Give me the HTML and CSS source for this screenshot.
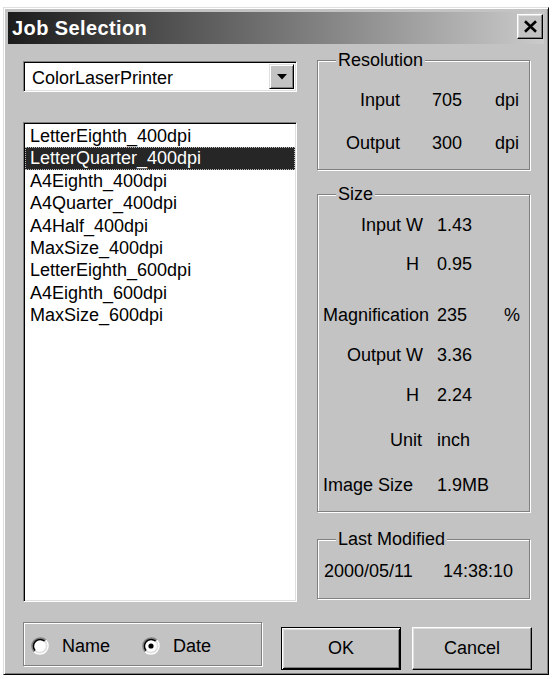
FILE: index.html
```html
<!DOCTYPE html>
<html lang="en">
<head>
<meta charset="utf-8">
<title>Job Selection</title>
<link rel="stylesheet" href="styles.css">
</head>
<body>
<div class="window">
  <div class="titlebar">
    <span class="title">Job Selection</span>
    <button class="close-btn" type="button" aria-label="Close">
      <svg width="15" height="13" viewBox="0 0 15 13"><path d="M2 1.2 L13 11.8 M13 1.2 L2 11.8" stroke="#000" stroke-width="2.6" fill="none"/></svg>
    </button>
  </div>

  <div class="dialog-body">
    <div class="columns">
      <div class="left-col">
        <div class="combo">
          <span class="combo-value">ColorLaserPrinter</span>
          <span class="combo-arrow">
            <svg width="10" height="6" viewBox="0 0 10 6"><polygon points="0,0 10,0 5,5.5" fill="#000"/></svg>
          </span>
        </div>
        <ul class="listbox">
          <li>LetterEighth_400dpi</li>
          <li class="selected">LetterQuarter_400dpi</li>
          <li>A4Eighth_400dpi</li>
          <li>A4Quarter_400dpi</li>
          <li>A4Half_400dpi</li>
          <li>MaxSize_400dpi</li>
          <li>LetterEighth_600dpi</li>
          <li>A4Eighth_600dpi</li>
          <li>MaxSize_600dpi</li>
        </ul>
      </div>

      <div class="right-col">
        <section class="group group-res">
          <h2 class="group-title">Resolution</h2>
          <div class="row first">
            <span class="lbl">Input</span><span class="val">705</span><span class="unit">dpi</span>
          </div>
          <div class="row">
            <span class="lbl">Output</span><span class="val">300</span><span class="unit">dpi</span>
          </div>
        </section>

        <section class="group group-size">
          <h2 class="group-title">Size</h2>
          <div class="row first">
            <span class="lbl">Input W</span><span class="val">1.43</span>
          </div>
          <div class="row gap-s">
            <span class="lbl lbl-h">H</span><span class="val">0.95</span>
          </div>
          <div class="row gap-l">
            <span class="lbl lbl-left">Magnification</span><span class="val">235</span><span class="unit">%</span>
          </div>
          <div class="row gap-m">
            <span class="lbl">Output W</span><span class="val">3.36</span>
          </div>
          <div class="row gap-m">
            <span class="lbl lbl-h">H</span><span class="val">2.24</span>
          </div>
          <div class="row gap-ml">
            <span class="lbl lbl-unit">Unit</span><span class="val">inch</span>
          </div>
          <div class="row gap-ml">
            <span class="lbl lbl-left">Image Size</span><span class="val">1.9MB</span>
          </div>
        </section>

        <section class="group group-date">
          <h2 class="group-title">Last Modified</h2>
          <div class="row first">
            <span class="date">2000/05/11</span><span class="time">14:38:10</span>
          </div>
        </section>
      </div>
    </div>

    <div class="bottom-row">
      <div class="sort-group">
        <label class="radio">
          <svg width="18" height="18" viewBox="0 0 18 18">
            <circle cx="9" cy="9" r="7" fill="#fff"/>
            <path d="M3.17 14.83 A8.25 8.25 0 0 1 14.83 3.17" stroke="#808080" stroke-width="1.5" fill="none"/>
            <path d="M14.83 3.17 A8.25 8.25 0 0 1 3.17 14.83" stroke="#fff" stroke-width="1.5" fill="none"/>
            <path d="M4.23 13.77 A6.75 6.75 0 0 1 13.77 4.23" stroke="#000" stroke-width="1.5" fill="none"/>
            <path d="M13.77 4.23 A6.75 6.75 0 0 1 4.23 13.77" stroke="#dfdfdf" stroke-width="1.5" fill="none"/>
          </svg>
          <span>Name</span>
        </label>
        <label class="radio">
          <svg width="18" height="18" viewBox="0 0 18 18">
            <circle cx="9" cy="9" r="7" fill="#fff"/>
            <path d="M3.17 14.83 A8.25 8.25 0 0 1 14.83 3.17" stroke="#808080" stroke-width="1.5" fill="none"/>
            <path d="M14.83 3.17 A8.25 8.25 0 0 1 3.17 14.83" stroke="#fff" stroke-width="1.5" fill="none"/>
            <path d="M4.23 13.77 A6.75 6.75 0 0 1 13.77 4.23" stroke="#000" stroke-width="1.5" fill="none"/>
            <path d="M13.77 4.23 A6.75 6.75 0 0 1 4.23 13.77" stroke="#dfdfdf" stroke-width="1.5" fill="none"/>
            <circle cx="9" cy="9" r="2.6" fill="#000"/>
          </svg>
          <span>Date</span>
        </label>
      </div>
      <button class="btn btn-default" type="button">OK</button>
      <button class="btn btn-cancel" type="button">Cancel</button>
    </div>
  </div>
</div>
</body>
</html>
```
FILE: styles.css
```css
* {
  box-sizing: border-box;
}

html,
body {
  margin: 0;
  padding: 0;
}

body {
  background: #fff;
  font-family: "Liberation Sans", Arial, sans-serif;
  font-size: 18px;
  color: #000;
}

/* Dialog frame with a raised 3D edge */
.window {
  margin: 7px 0 0 3px;
  width: 546px;
  height: 668px;
  background: #c3c3c3;
  border: 1px solid;
  border-color: #dfdfdf #000 #000 #dfdfdf;
  box-shadow: inset 1px 1px #fff, inset -1px -1px #808080;
  padding: 4px;
  display: flex;
  flex-direction: column;
}

.titlebar {
  height: 32px;
  flex-shrink: 0;
  display: flex;
  align-items: flex-start;
  justify-content: space-between;
  padding: 0 1px 0 4px;
  background: linear-gradient(to right, #1c1c1c 0%, #2a2a2a 8%, #cbcbcb 100%);
}

.title {
  color: #fff;
  font-weight: bold;
  font-size: 20px;
  letter-spacing: 0.4px;
  line-height: 32px;
}

.close-btn {
  margin-top: 2px;
  width: 26px;
  height: 25px;
  padding: 0;
  display: flex;
  align-items: center;
  justify-content: center;
  background: #c3c3c3;
  border: 1px solid;
  border-color: #fff #000 #000 #fff;
  box-shadow: inset -1px -1px #808080, inset 1px 1px #dfdfdf;
}

.dialog-body {
  flex: 1;
  display: flex;
  flex-direction: column;
  padding: 16px 14px 0 15px;
}

.columns {
  display: flex;
  gap: 20px;
}

.left-col {
  width: 274px;
  flex-shrink: 0;
  display: flex;
  flex-direction: column;
}

.right-col {
  flex: 1;
  display: flex;
  flex-direction: column;
}

/* Sunken field edge shared by the combo and the list */
.combo,
.listbox {
  background: #fff;
  border: 1px solid;
  border-color: #808080 #fff #fff #808080;
  box-shadow: inset 1px 1px #000, inset -1px -1px #dfdfdf;
}

.combo {
  margin-top: 1px;
  height: 31px;
  display: flex;
  align-items: stretch;
  padding: 2px;
}

.combo-value {
  flex: 1;
  padding-left: 6px;
  line-height: 28px;
}

.combo-arrow {
  width: 25px;
  display: flex;
  align-items: center;
  justify-content: center;
  padding-top: 1px;
  background: #c3c3c3;
  border: 1px solid;
  border-color: #dfdfdf #000 #000 #dfdfdf;
  box-shadow: inset 1px 1px #fff, inset -1px -1px #808080;
}

.listbox {
  margin: 30px 0 0;
  height: 480px;
  list-style: none;
  padding: 2px 1px 1px 1px;
}

.listbox li {
  line-height: 22.4px;
  padding-left: 5px;
  white-space: nowrap;
}

.listbox li.selected {
  background: #262626;
  color: #fff;
  outline: 1px dotted #bdbdbd;
  outline-offset: -1px;
}

/* Etched group boxes */
.group {
  border: 1px solid #808080;
  box-shadow: inset 1px 1px #fff, 1px 1px #fff;
  padding: 0 0 14px 5px;
}

.group-title {
  margin: -13px 0 0 13px;
  padding: 0 2px;
  width: fit-content;
  font-size: 18px;
  font-weight: normal;
  line-height: 24px;
  background: #c3c3c3;
}

.row {
  display: grid;
  height: 24px;
  align-items: center;
  white-space: nowrap;
}

.group-res .row {
  grid-template-columns: 77px 95px auto;
}

.group-res .row.first {
  margin-top: 16px;
}

.group-res .row + .row {
  margin-top: 19px;
}

.group-res .lbl {
  text-align: right;
}

.group-res .val {
  padding-left: 32px;
}

.group-size {
  margin-top: 24px;
}

.group-size .row {
  grid-template-columns: 108px 73px auto;
}

.group-size .row.first {
  margin-top: 7px;
}

.group-size .lbl {
  text-align: right;
  padding-right: 8px;
}

.group-size .lbl-h {
  padding-right: 12px;
}

.group-size .lbl-unit {
  padding-right: 9px;
}

.group-size .lbl-left {
  text-align: left;
  padding-right: 0;
}

.group-size .val {
  padding-left: 6px;
}

.row.gap-s {
  margin-top: 15px;
}

.row.gap-m {
  margin-top: 16px;
}

.row.gap-ml {
  margin-top: 21px;
}

.row.gap-l {
  margin-top: 27px;
}

.group-date {
  margin-top: 27px;
  padding-bottom: 15px;
}

.group-date .row {
  grid-template-columns: 120px auto;
}

.group-date .row.first {
  margin-top: 8px;
}

.group-date .date {
  padding-left: 1px;
}

/* Sort options and dialog buttons */
.bottom-row {
  margin-top: 20px;
  display: flex;
  align-items: flex-start;
}

.sort-group {
  flex-shrink: 0;
  width: 239px;
  height: 44px;
  display: flex;
  align-items: center;
  gap: 32px;
  padding: 4px 0 0 7px;
  border: 1px solid #808080;
  box-shadow: inset 1px 1px #fff, 1px 1px #fff;
}

.radio {
  display: flex;
  align-items: center;
  gap: 13px;
}

.radio svg {
  display: block;
}

.btn {
  flex-shrink: 0;
  margin-top: 5px;
  width: 120px;
  height: 43px;
  padding: 0;
  font-family: "Liberation Sans", Arial, sans-serif;
  font-size: 18px;
  color: #000;
  background: #c3c3c3;
  border: 1px solid;
}

.btn-default {
  margin-left: 19px;
  border-color: #000;
  box-shadow: inset 1px 1px #fff, inset -1px -1px #000, inset 2px 2px #dfdfdf, inset -2px -2px #808080;
}

.btn-cancel {
  margin-left: 11px;
  border-color: #fff #000 #000 #fff;
  box-shadow: inset -1px -1px #808080, inset 1px 1px #dfdfdf;
}
```
